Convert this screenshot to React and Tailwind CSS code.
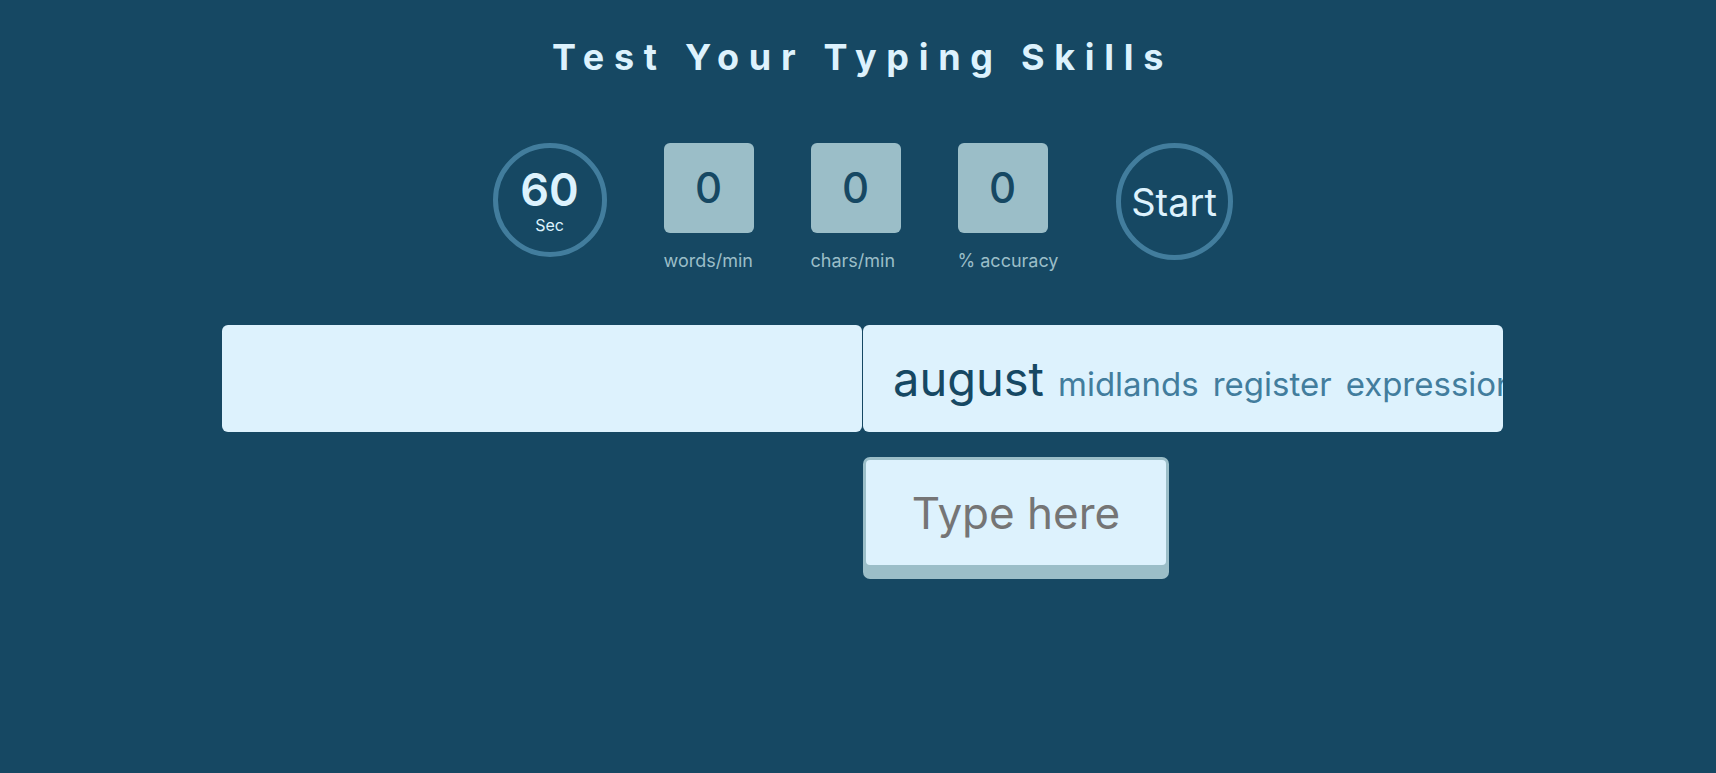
import React, { useState } from 'react';

// 통계 박스
const StatBox = ({ value, label }) => (
  <div className="flex flex-col items-start">
    <div className="w-[90px] h-[90px] rounded-[6px] bg-[#9BBEC8] flex items-center justify-center text-[42px] leading-none font-medium text-[#164863]">
      {value}
    </div>
    <span className="mt-[16px] text-[18px] leading-[24px] text-[#9BBEC8] whitespace-nowrap">{label}</span>
  </div>
);

const words = ['august', 'midlands', 'register', 'expression', 'notebook', 'standard', 'village'];

function App() {
  const [typed, setTyped] = useState('');

  return (
    <div className="min-h-screen w-full bg-[#164863] pl-[9px] font-['Inter',sans-serif] text-[#DDF2FD]">
      <div className="flex flex-col items-center">
        {/* 제목 */}
        <h1 className="mt-[39px] text-[36px] leading-[36px] font-bold tracking-[9.7px] text-[#DDF2FD]">
          Test Your Typing Skills
        </h1>

        {/* 통계 */}
        <div className="mt-[68px] flex items-start gap-[57px]">
          <div className="w-[114px] h-[114px] rounded-full border-[5px] border-[#427D9D] flex flex-col items-center justify-center gap-[5px]">
            <span className="text-[45px] leading-none font-semibold">60</span>
            <span className="text-[16px] leading-none">Sec</span>
          </div>
          <StatBox value="0" label="words/min" />
          <StatBox value="0" label="chars/min" />
          <StatBox value="0" label="% accuracy" />
          <button className="w-[117px] h-[117px] rounded-full border-[5px] border-[#427D9D] flex items-center justify-center text-[38px] leading-none text-[#DDF2FD]">
            Start
          </button>
        </div>

        {/* 단어 영역 */}
        <div className="mt-[52px] flex w-[1281px]">
          <div className="w-[640px] h-[107px] rounded-[6px] bg-[#DDF2FD]"></div>
          <div className="ml-[1px] w-[640px] h-[107px] rounded-[6px] bg-[#DDF2FD] overflow-hidden flex items-center pl-[30px]">
            <div className="flex items-baseline gap-[14px] whitespace-nowrap leading-none">
              {words.map((w, i) => (
                <span
                  key={i}
                  className={i === 0 ? 'text-[47px] text-[#164863]' : 'text-[33px] text-[#427D9D]'}
                >
                  {w}
                </span>
              ))}
            </div>
          </div>
        </div>

        {/* 입력 */}
        <div className="mt-[25px] flex w-[1281px]">
          <div className="w-[641px]"></div>
          <div className="w-[306px] h-[122px] rounded-[7px] bg-[#9BBEC8] p-[3px] pb-[14px]">
            <input
              value={typed}
              onChange={(e) => setTyped(e.target.value)}
              placeholder="Type here"
              className="w-full h-full rounded-[4px] bg-[#DDF2FD] text-center text-[44px] text-[#333] placeholder:text-[#757575] outline-none"
            />
          </div>
        </div>
      </div>
    </div>
  );
}

export default App;
